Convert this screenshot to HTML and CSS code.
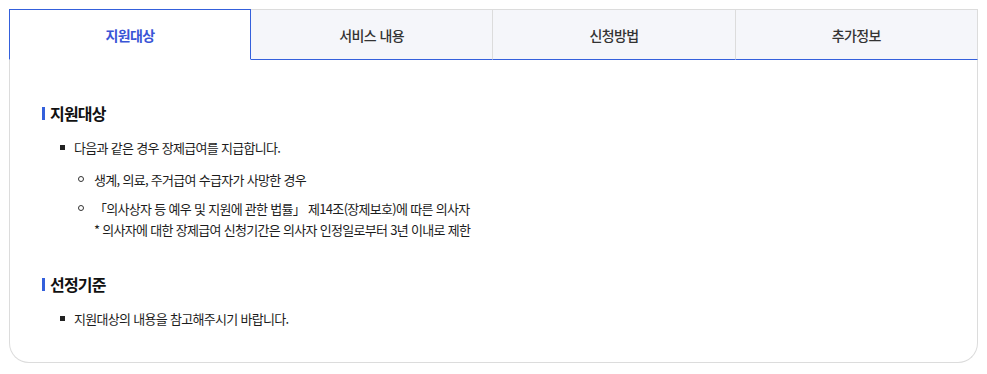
FILE: index.html
```html
<!DOCTYPE html>
<html lang="ko">
<head>
    <meta charset="UTF-8">
    <meta name="viewport" content="width=device-width, initial-scale=1.0">
    <title>장제급여</title>
    <link rel="stylesheet" href="styles.css">
</head>
<body>
    <div class="wrap">
        <ul class="tabs">
            <li class="tab active">지원대상</li>
            <li class="tab">서비스 내용</li>
            <li class="tab">신청방법</li>
            <li class="tab">추가정보</li>
        </ul>
        <div class="panel">
            <h3 class="title">지원대상</h3>
            <ul class="list">
                <li>다음과 같은 경우 장제급여를 지급합니다.
                    <ul class="sub">
                        <li>생계, 의료, 주거급여 수급자가 사망한 경우</li>
                        <li>「의사상자 등 예우 및 지원에 관한 법률」 제14조(장제보호)에 따른 의사자<br>* 의사자에 대한 장제급여 신청기간은 의사자 인정일로부터 3년 이내로 제한</li>
                    </ul>
                </li>
            </ul>
            <h3 class="title">선정기준</h3>
            <ul class="list">
                <li>지원대상의 내용을 참고해주시기 바랍니다.</li>
            </ul>
        </div>
    </div>
</body>
</html>
```

FILE: styles.css
```css
body {
    margin: 9px;
    font-family: "Noto Sans CJK KR", "Noto Sans", sans-serif;
    color: #222;
    background: #fff;
}
.wrap {
    width: 969px;
}
.tabs {
    display: flex;
    margin: 0;
    padding: 0;
    list-style: none;
}
.tab {
    flex: 1;
    height: 51px;
    display: flex;
    align-items: center;
    justify-content: center;
    font-size: 14px;
    font-weight: 500;
    letter-spacing: -0.6px;
    color: #333;
    background: #f5f6fa;
    border-top: 1px solid #dcdcdc;
    border-right: 1px solid #dcdcdc;
    border-bottom: 1px solid #3460dc;
    box-sizing: border-box;
}
.tab.active {
    flex: 0 0 242px;
    background: #fff;
    color: #3a55d6;
    font-weight: 700;
    border: 1px solid #3460dc;
    border-bottom: 1px solid #fff;
}
.panel {
    border: 1px solid #dcdcdc;
    border-top: none;
    border-radius: 0 0 20px 20px;
    padding: 42px 32px 33px 32px;
}
.title {
    margin: 0 0 13px;
    padding-left: 8px;
    font-size: 16px;
    font-weight: 700;
    letter-spacing: -0.8px;
    line-height: 22px;
    color: #111;
    position: relative;
}
.title::before {
    content: "";
    position: absolute;
    left: 0;
    top: 5px;
    width: 3px;
    height: 13px;
    background: #3460dc;
}
.list {
    margin: 0 0 33px;
    padding: 0 0 0 17px;
    list-style: none;
    font-size: 13px;
    letter-spacing: -0.7px;
    line-height: 21px;
    color: #1c1c1c;
}
.list:last-child {
    margin-bottom: 0;
}
.list > li {
    position: relative;
    padding-left: 15px;
}
.list > li::before {
    content: "";
    position: absolute;
    left: 1px;
    top: 8px;
    width: 5px;
    height: 5px;
    background: #222;
}
.sub {
    margin: 11px 0 0;
    padding: 0 0 0 4px;
    list-style: none;
}
.sub li {
    position: relative;
    padding-left: 16px;
    margin-bottom: 8px;
}
.sub li::before {
    content: "";
    position: absolute;
    left: 0;
    top: 7px;
    width: 4px;
    height: 4px;
    border: 1px solid #333;
    border-radius: 50%;
}
```
